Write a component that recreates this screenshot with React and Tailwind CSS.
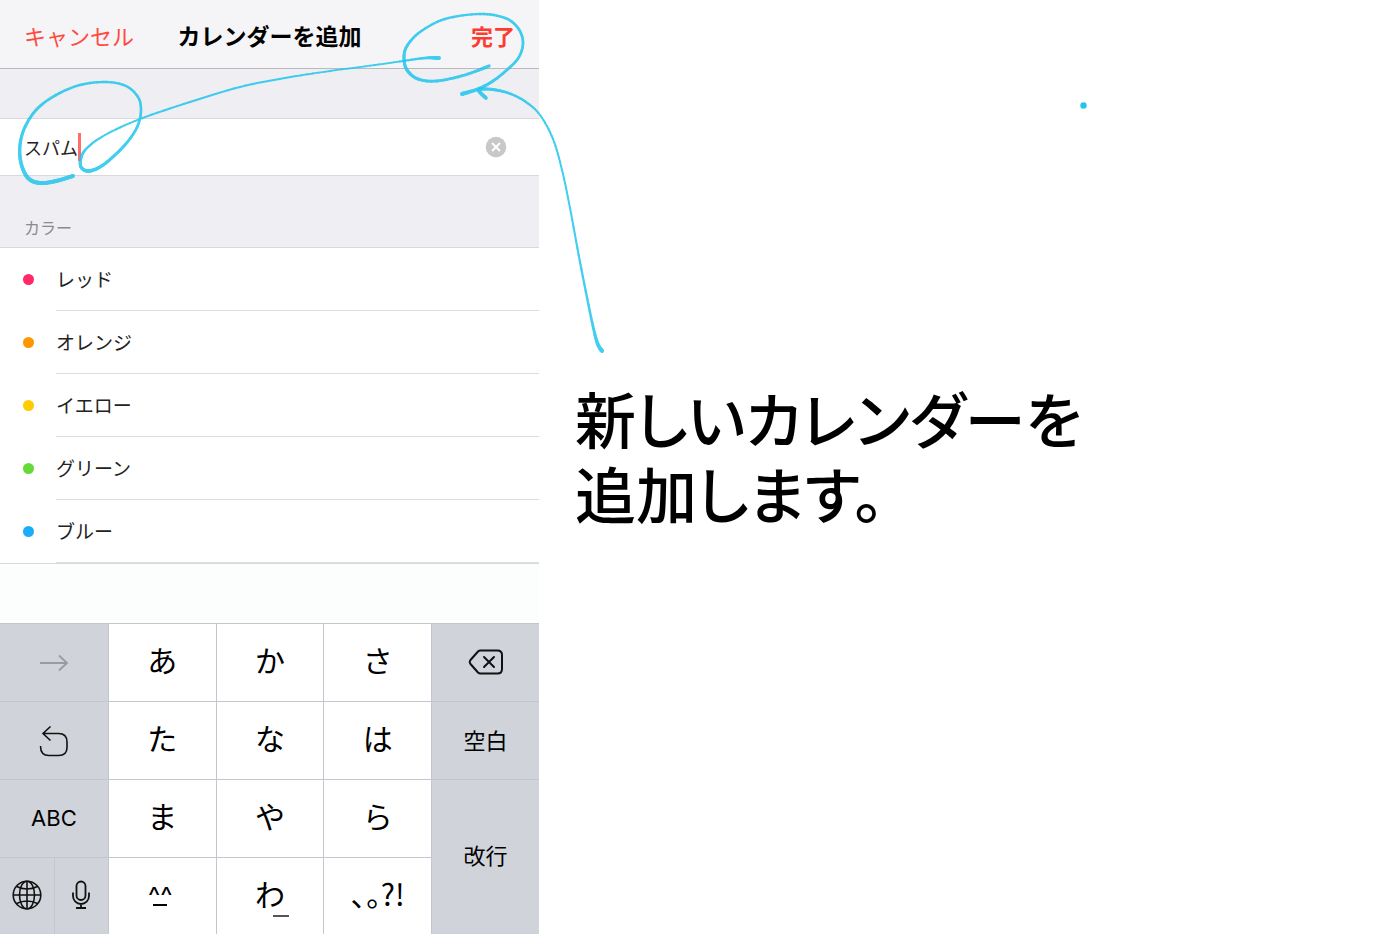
import { useState } from "react";

const INK = "#22c6ed";

const COLORS = [
  { name: "レッド", dot: "bg-[#ff2968]" },
  { name: "オレンジ", dot: "bg-[#ff9500]" },
  { name: "イエロー", dot: "bg-[#ffcc00]" },
  { name: "グリーン", dot: "bg-[#63da38]" },
  { name: "ブルー", dot: "bg-[#1badf8]" },
];

// pen strokes as [x, y, width]
const STROKES = [
  [
    [73, 176, 4], [56, 181, 4], [40, 183, 4], [28, 178, 4], [21, 163, 3.5],
    [20, 145, 3.2], [25, 127, 3], [37, 109, 2.8], [56, 95, 2.6], [80, 85, 2.5],
    [106, 82, 2.4], [126, 86, 2.4], [138, 97, 2.4], [141, 110, 2.5],
    [138, 125, 2.6], [129, 140, 2.7], [115, 155, 3], [100, 167, 3.2],
    [88, 171, 3.6], [81, 167, 3.2], [81, 158, 2.8], [87, 148, 2.4],
    [105, 135, 2], [140, 119, 2], [190, 102, 2], [240, 87, 2], [285, 78, 2],
    [330, 71, 1.8], [375, 65, 1.8], [403, 61, 2], [425, 58, 2.6], [439, 58, 4],
  ],
  [
    [489, 66, 3.4], [465, 75, 2.8], [437, 81, 2.8], [418, 79, 3], [407, 70, 3.2],
    [404, 58, 3], [407, 46, 2.8], [420, 32, 2.5], [445, 19, 2.4], [480, 14, 2.4],
    [505, 18, 2.5], [518, 28, 2.6], [523, 42, 2.6], [519, 57, 2.6],
    [508, 69, 2.7], [493, 81, 2.8], [478, 89, 3.2], [462, 94, 4],
  ],
  [
    [602, 351, 4], [597, 342, 3.4], [591, 317, 2.6], [580, 262, 2.2],
    [570, 208, 2], [562, 170, 2], [553, 139, 2], [540, 115, 2],
    [526, 102, 2.2], [511, 94, 2.4], [496, 90, 2.8], [483, 89, 3],
    [479, 91, 3.4], [486, 98, 3.6],
  ],
];

const spline = (a, b, c, d, t) =>
  0.5 *
  (2 * b +
    (c - a) * t +
    (2 * a - 5 * b + 4 * c - d) * t * t +
    (3 * b - a - 3 * c + d) * t * t * t);

// each stroke becomes short round-capped lines, so the width can change along it
function penLines(points) {
  const dots = [];
  for (let i = 0; i < points.length - 1; i++) {
    const p = [
      points[i - 1] || points[i],
      points[i],
      points[i + 1],
      points[i + 2] || points[i + 1],
    ];
    for (let s = 0; s < 8; s++) {
      dots.push([0, 1, 2].map((k) => spline(p[0][k], p[1][k], p[2][k], p[3][k], s / 8)));
    }
  }
  dots.push(points[points.length - 1]);
  return dots.slice(1).map((d, i) => ({ from: dots[i], to: d }));
}

function Ink() {
  return (
    <svg
      viewBox="0 0 1400 400"
      className="absolute top-0 left-0 w-full pointer-events-none"
      aria-hidden="true"
    >
      {STROKES.map((stroke, i) => (
        <g key={i} stroke={INK} strokeLinecap="round" opacity="0.85">
          {penLines(stroke).map(({ from, to }, j) => (
            <line key={j} x1={from[0]} y1={from[1]} x2={to[0]} y2={to[1]} strokeWidth={to[2]} />
          ))}
        </g>
      ))}
      <circle cx="1083.5" cy="105.5" r="3.2" fill={INK} />
    </svg>
  );
}

function ArrowIcon() {
  return (
    <svg width="30" height="18" viewBox="0 0 30 18" fill="none" stroke="#999b9f" strokeWidth="1.8">
      <path d="M1 9h27M20 1.5 28 9l-8 7.5" />
    </svg>
  );
}

function UndoIcon() {
  return (
    <svg width="30" height="32" viewBox="0 0 30 32" fill="none" stroke="#111" strokeWidth="1.6">
      <path d="M11.500 1.500 4 8.500 11.500 15.500M4 8.500H19.500Q28 8.500 28 17V22.500Q28 30.500 19.500 30.500H10Q1.500 30.500 1.500 21" />
    </svg>
  );
}

function GlobeIcon() {
  return (
    <svg width="30" height="30" viewBox="0 0 30 30" fill="none" stroke="#111" strokeWidth="1.6">
      <circle cx="15" cy="15" r="13.800" />
      <ellipse cx="15" cy="15" rx="7.500" ry="13.800" />
      <path d="M15 1v28M1 15h28M4.500 6.500Q15 11.500 25.500 6.500M4.500 23.500Q15 18.500 25.500 23.500" />
    </svg>
  );
}

function MicIcon() {
  return (
    <svg width="20" height="30" viewBox="0 0 20 30" fill="none" stroke="#111" strokeWidth="1.800">
      <rect x="5.500" y="1.500" width="9" height="18.500" rx="4.500" />
      <path d="M2 12.500V16a8 8 0 0 0 16 0v-3.500M10 24v4M5 28h10" />
    </svg>
  );
}

function DeleteIcon() {
  return (
    <svg width="36" height="26" viewBox="0 0 36 26" fill="none" stroke="#111" strokeWidth="2" strokeLinejoin="round">
      <path d="M12.500 1.500H29.500Q34 1.500 34 6V20Q34 24.500 29.500 24.500H12.500Q11 24.500 10 23.500L2.500 15Q1 13 2.500 11L10 2.500Q11 1.500 12.500 1.500Z" />
      <path d="m16 8 10 10M26 8 16 18" strokeLinecap="round" />
    </svg>
  );
}

function Key({ dark, className = "", children, ...rest }) {
  return (
    <button
      type="button"
      className={`flex items-center justify-center border-t border-l border-[#c3c6cf] text-black ${
        dark ? "bg-[#d0d3da]" : "bg-white"
      } ${className}`}
      {...rest}
    >
      {children}
    </button>
  );
}

function Keyboard() {
  return (
    <div className="grid grid-cols-5 auto-rows-[minmax(78px,auto)] text-[30px] leading-9">
      <Key dark className="border-l-0" aria-label="次へ"><ArrowIcon /></Key>
      <Key className="pb-2">あ</Key>
      <Key className="pb-2">か</Key>
      <Key className="pb-2">さ</Key>
      <Key dark className="pb-0.5" aria-label="削除"><DeleteIcon /></Key>

      <Key dark className="border-l-0" aria-label="取り消す"><UndoIcon /></Key>
      <Key className="pb-2">た</Key>
      <Key className="pb-2">な</Key>
      <Key className="pb-2">は</Key>
      <Key dark className="pb-1 text-[22px]">空白</Key>

      <Key dark className="pb-0.5 border-l-0 font-[Inter,sans-serif] text-[22px]">ABC</Key>
      <Key className="pb-2">ま</Key>
      <Key className="pb-2">や</Key>
      <Key className="pb-2">ら</Key>
      <Key dark className="row-span-2 pb-2 text-[22px]">改行</Key>

      <div className="grid grid-cols-2">
        <Key dark className="pb-1 border-l-0" aria-label="次のキーボード"><GlobeIcon /></Key>
        <Key dark className="pb-1" aria-label="音声入力"><MicIcon /></Key>
      </div>
      <Key className="flex-col pr-1 font-[Inter,sans-serif] text-[26px]" aria-label="顔文字">
        <span className="leading-4">^^</span>
        <span className="w-3.5 h-0.5 bg-black" />
      </Key>
      <Key className="pb-2">
        <span className="relative">
          わ
          <span className="absolute right-[-4px] bottom-[-6px] w-4 h-0.5 bg-[#555]" />
        </span>
      </Key>
      <Key className="[font-feature-settings:'palt'] pb-2">、。?!</Key>
    </div>
  );
}

function CalendarForm() {
  const [name, setName] = useState("スパム");

  return (
    <section className="w-[38.5%] shrink-0 bg-[#efeef3]">
      <header className="grid grid-cols-[1fr_auto_1fr] items-center px-6 pt-0.5 h-[69px] bg-[#f5f5f7] border-b border-[#b9b9be] text-[23px]">
        <button type="button" className="justify-self-start text-[22px] text-[#ff4a41]">キャンセル</button>
        <h1 className="font-bold">カレンダーを追加</h1>
        <button type="button" className="justify-self-end text-[22px] text-[#ff3b30] font-bold">完了</button>
      </header>

      <div className="flex items-center mt-[49px] h-[58px] pl-6 pr-8 bg-white border-y border-[#d9d8de]">
        <input
          aria-label="カレンダー名"
          value={name}
          onChange={(e) => setName(e.target.value)}
          className="field-sizing-content text-[18px] text-[#222] outline-none caret-transparent"
        />
        <span className="w-[3px] h-7 bg-[#ff6f68]" />
        <button type="button" className="ml-auto" aria-label="消去" onClick={() => setName("")}>
          <svg width="22" height="22" viewBox="0 0 22 22">
            <circle cx="11" cy="11" r="10.300" fill="#c8c8c8" />
            <path d="m7 7 8 8M15 7l-8 8" stroke="#fff" strokeWidth="2" />
          </svg>
        </button>
      </div>

      <h2 className="flex items-end h-[71px] pl-6 pb-2 text-base text-[#8a8a8f]">カラー</h2>

      <ul className="bg-white border-t border-[#d9d8de] border-b">
        {COLORS.map((color) => (
          <li key={color.name}>
            <button type="button" className="flex items-center w-full pl-[23px] text-[19px] text-left">
              <span className={`w-[11px] h-[11px] rounded-full ${color.dot}`} />
              <span className="flex items-center flex-1 ml-[22px] h-[63px] border-b border-[#dededf] text-[#222]">
                {color.name}
              </span>
            </button>
          </li>
        ))}
      </ul>

      <div className="h-[59px] bg-[#fcfdfd]" />
      <Keyboard />
    </section>
  );
}

export default function App() {
  return (
    <main
      lang="ja"
      className="relative flex min-h-screen overflow-hidden bg-white font-['Noto_Sans_CJK_JP',sans-serif]"
    >
      <CalendarForm />
      <p className="pl-9 pt-[380px] text-[61px] leading-[75px] font-medium text-black [font-feature-settings:'palt']">
        <span className="block">新しいカレンダーを</span>
        <span className="block">追加します。</span>
      </p>
      <Ink />
    </main>
  );
}
